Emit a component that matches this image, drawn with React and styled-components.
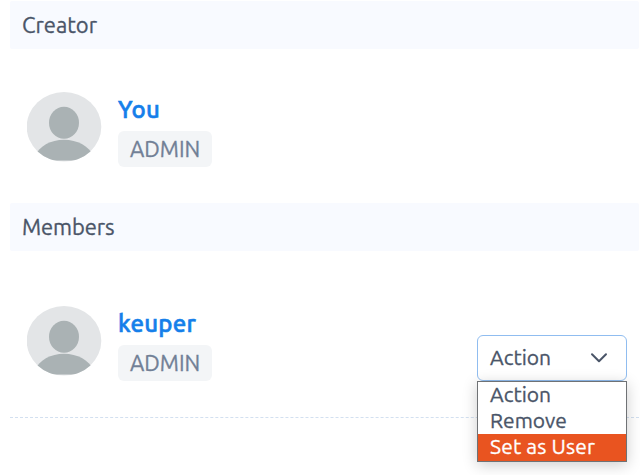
import React from "react";
import styled, { createGlobalStyle } from "styled-components";

const GlobalStyle = createGlobalStyle`
  * { box-sizing: border-box; }
  body {
    margin: 0;
    background: #fff;
    overflow: hidden;
    font-family: Ubuntu, "Noto Sans", sans-serif;
    color: #4a5568;
    -webkit-text-stroke: 0.3px currentColor;
  }
`;

const Page = styled.main`
  width: 640px;
  height: 475px;
  padding: 1px 1px 0 10px;
  overflow: hidden;
`;

const SectionTitle = styled.h2`
  margin: 0;
  height: 48px;
  padding-left: 12px;
  background: #f8faff;
  border-radius: 2px;
  font-size: 22px;
  font-weight: 400;
  line-height: 48px;
  letter-spacing: ${(p) => p.$tracking}px;
`;

const MemberRow = styled.div`
  display: flex;
  align-items: flex-start;
  height: ${(p) => p.$height}px;
  padding: ${(p) => p.$top}px 12px 0 17px;
  border-bottom: ${(p) => (p.$divider ? "1px dashed #d3e0f0" : "0")};
`;

const Avatar = styled.svg`
  display: block;
  width: 75px;
  height: 70px;
  flex: none;
`;

const Identity = styled.div`
  display: flex;
  flex-direction: column;
  align-items: flex-start;
  margin-left: 16px;
  padding-top: 3px;
`;

const Name = styled.a`
  height: 30px;
  margin-bottom: 6px;
  color: #157fea;
  font-size: 24px;
  font-weight: 500;
  line-height: 30px;
  letter-spacing: ${(p) => p.$tracking}px;
  -webkit-text-stroke-width: 0.6px;
`;

const Role = styled.span`
  width: 94px;
  height: 36px;
  padding-left: 12px;
  border-radius: 6px;
  background: #f3f5f7;
  color: #718096;
  font-size: 22px;
  line-height: 36px;
`;

const Dropdown = styled.div`
  position: relative;
  width: 150px;
  margin: 29px 0 0 auto;
`;

const SelectBox = styled.button`
  display: flex;
  align-items: center;
  justify-content: space-between;
  width: 100%;
  height: 46px;
  padding: 0 18px 2px 12px;
  border: 1px solid #90bdf0;
  border-radius: 6px;
  background: #fff;
  color: inherit;
  font: inherit;
  font-size: 21px;
`;

const Options = styled.ul`
  position: absolute;
  top: 46px;
  left: 0;
  width: 150px;
  height: 81px;
  margin: 0;
  padding: 0;
  list-style: none;
  border: 1px solid #6f7275;
  background: #fff;
  box-shadow: 0 3px 14px rgba(0, 0, 0, 0.2);
`;

const Option = styled.li`
  height: ${(p) => (p.$active ? 27 : 26)}px;
  padding-left: 12px;
  background: ${(p) => (p.$active ? "#e95420" : "#fff")};
  color: ${(p) => (p.$active ? "#fff" : "inherit")};
  font-size: 21px;
  line-height: 24px;
  letter-spacing: ${(p) => p.$tracking}px;
`;

function Portrait({ id }) {
  return (
    <Avatar viewBox="0 0 75 70" aria-hidden="true">
      <defs>
        <clipPath id={id}>
          <rect width="75" height="68.5" />
        </clipPath>
        <clipPath id={id + "-round"}>
          <ellipse cx="37" cy="34.8" rx="37.3" ry="34.8" />
        </clipPath>
      </defs>
      <ellipse cx="37" cy="34.8" rx="37.3" ry="34.8" fill="#e3e5e7" />
      <g fill="#aab2b4" clipPath={`url(#${id})`}>
        <ellipse cx="37" cy="30.8" rx="15" ry="16" />
        <path
          clipPath={`url(#${id}-round)`}
          d="M7.7 64C12.7 54 23.7 47.8 37 47.8S61.7 54 66.7 64v6H7.7z"
        />
      </g>
    </Avatar>
  );
}

function Member({ id, name, tracking, children, ...row }) {
  return (
    <MemberRow {...row}>
      <Portrait id={id} />
      <Identity>
        <Name $tracking={tracking}>{name}</Name>
        <Role>ADMIN</Role>
      </Identity>
      {children}
    </MemberRow>
  );
}

export default function App() {
  return (
    <>
      <GlobalStyle />
      <Page>
        <SectionTitle $tracking={0}>Creator</SectionTitle>
        <Member id="creator" name="You" tracking={0.3} $height={154} $top={43} />
        <SectionTitle $tracking={-0.1}>Members</SectionTitle>
        <Member id="member" name="keuper" tracking={0.25} $height={167} $top={55} $divider>
          <Dropdown>
            <SelectBox>
              Action
              <svg width="18" height="12" viewBox="0 0 18 12" fill="none" stroke="#4a5568" strokeWidth="2" strokeLinecap="round" strokeLinejoin="round">
                <path d="M2 3.2l7 7 7-7" />
              </svg>
            </SelectBox>
            <Options>
              <Option $tracking={0}>Action</Option>
              <Option $tracking={0}>Remove</Option>
              <Option $tracking={0.15} $active>Set as User</Option>
            </Options>
          </Dropdown>
        </Member>
      </Page>
    </>
  );
}
